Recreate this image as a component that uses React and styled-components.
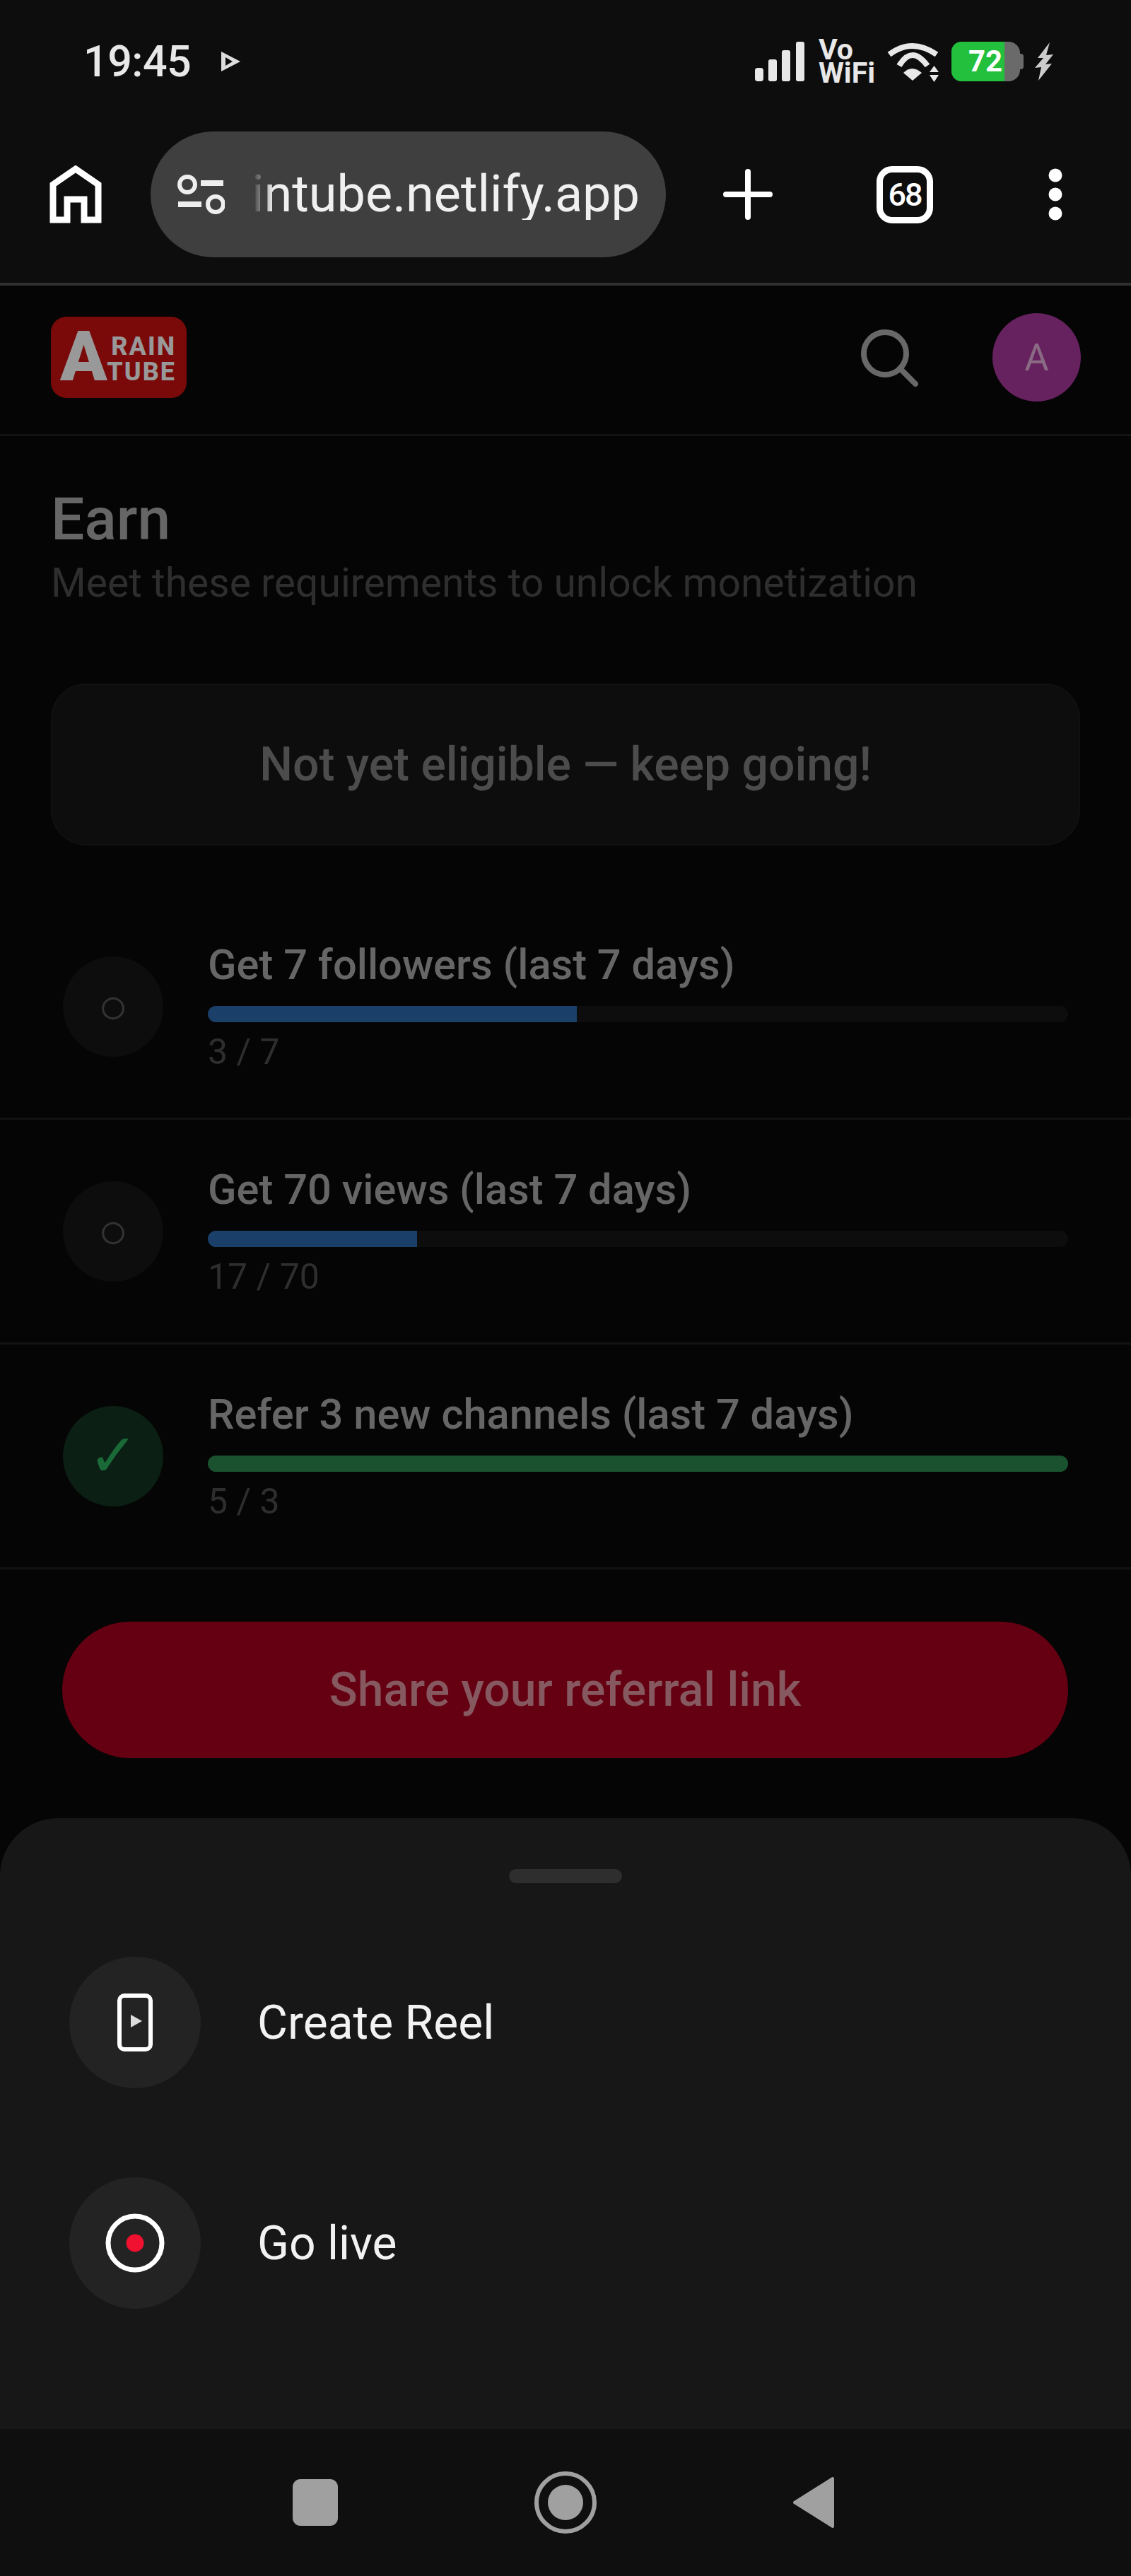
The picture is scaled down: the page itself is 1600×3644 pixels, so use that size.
import React from 'react';
import styled, { createGlobalStyle } from 'styled-components';

const GlobalStyle = createGlobalStyle`
  html, body { margin: 0; padding: 0; background: #050505; }
  * { box-sizing: border-box; }
`;

const requirements = [
  { label: 'Get 7 followers (last 7 days)', done: 3, goal: 7 },
  { label: 'Get 70 views (last 7 days)', done: 17, goal: 70 },
  { label: 'Refer 3 new channels (last 7 days)', done: 5, goal: 3 },
];

export default function App() {
  return (
    <Phone>
      <GlobalStyle />
      <Chrome>
        <StatusBar>
          <Clock>19:45</Clock>
          <svg width="29" height="30" viewBox="0 0 29 30">
            <path fill="#ddd" fillRule="evenodd" d="M1 1 L28 15 L1 29 Z M7 9 L7 21 L17 15 Z" />
          </svg>
          <StatusRight>
            <SignalBars width="70" height="56" viewBox="0 0 70 56" fill="#e8e8e8">
              <rect x="0" y="37" width="12" height="19" rx="4" />
              <rect x="19" y="25" width="12" height="31" rx="3" />
              <rect x="38" y="12" width="12" height="44" rx="3" />
              <rect x="58" y="0" width="12" height="56" rx="3" />
            </SignalBars>
            <VoWifi>
              <span>Vo</span>
              <span>WiFi</span>
            </VoWifi>
            <svg width="76" height="60" viewBox="0 0 76 60" fill="none">
              <path d="M4 20 Q36 -4 71 20" stroke="#e8e8e8" strokeWidth="8" />
              <path d="M18 36 Q36 6 58 36" stroke="#e8e8e8" strokeWidth="8" />
              <path d="M24 46 Q36 34 50 46 L37 57 Z" fill="#e8e8e8" />
              <path d="M61 45 H74 L67.5 36 Z M61 49 H74 L67.5 59 Z" fill="#e8e8e8" />
            </svg>
            <Battery>
              <BatteryLevel>72</BatteryLevel>
              <BatteryTip />
            </Battery>
            <svg width="26" height="54" viewBox="0 0 26 54">
              <path
                fill="#ccc"
                d="M21 0 L4 22 L12 22 L0 36 L9 35 L5 54 L24 30 L15 31 L26 17 L16 18 Z"
              />
            </svg>
          </StatusRight>
        </StatusBar>
        <Toolbar>
          <ToolCell>
            <svg width="74" height="82" viewBox="0 0 74 82" fill="none">
              <path
                d="M5 77 V27 L37 5 L69 27 V77 H49 V48 H25 V77 Z"
                stroke="#fff"
                strokeWidth="9"
                strokeLinejoin="miter"
              />
            </svg>
          </ToolCell>
          <UrlPill>
            <svg width="68" height="62" viewBox="0 0 68 62" fill="none" stroke="#eee" strokeWidth="6">
              <circle cx="15" cy="17" r="11" />
              <path d="M34 15 H66" strokeWidth="8" />
              <path d="M2 45 H35" strokeWidth="8" />
              <circle cx="55" cy="45" r="11" />
            </svg>
            <UrlText>intube.netlify.app</UrlText>
          </UrlPill>
          <ToolCell>
            <svg width="72" height="74" viewBox="0 0 72 74" stroke="#fff" strokeWidth="8" strokeLinecap="round">
              <path d="M36 5 V69 M5 37 H67" />
            </svg>
          </ToolCell>
          <ToolCell>
            <TabCount>68</TabCount>
          </ToolCell>
          <ToolCell>
            <svg width="20" height="74" viewBox="0 0 20 74" fill="#fff">
              <circle cx="10" cy="10" r="9.5" />
              <circle cx="10" cy="37" r="9.5" />
              <circle cx="10" cy="64" r="9.5" />
            </svg>
          </ToolCell>
        </Toolbar>
      </Chrome>

      <SiteHeader>
        <Logo>
          <LogoInitial>A</LogoInitial>
          <LogoWords>
            <span>RAIN</span>
            <span>TUBE</span>
          </LogoWords>
        </Logo>
        <HeaderActions>
          <svg width="82" height="82" viewBox="0 0 82 82" fill="none" stroke="#686868" strokeWidth="8">
            <circle cx="35" cy="35" r="30" />
            <path d="M56 56 L78 78" strokeLinecap="round" />
          </svg>
          <Avatar>A</Avatar>
        </HeaderActions>
      </SiteHeader>

      <Main>
        <Title>Earn</Title>
        <Subtitle>Meet these requirements to unlock monetization</Subtitle>
        <StatusCard>Not yet eligible — keep going!</StatusCard>
        <RequirementList>
          {requirements.map((r) => {
            const complete = r.done >= r.goal;
            return (
              <Requirement key={r.label}>
                <Marker $complete={complete}>{complete ? '✓' : '○'}</Marker>
                <RequirementBody>
                  <RequirementLabel>{r.label}</RequirementLabel>
                  <Track>
                    <Fill $complete={complete} style={{ width: `${Math.min(100, (r.done / r.goal) * 100)}%` }} />
                  </Track>
                  <Count>
                    {r.done} / {r.goal}
                  </Count>
                </RequirementBody>
              </Requirement>
            );
          })}
        </RequirementList>
        <ShareButton>Share your referral link</ShareButton>
      </Main>

      <Sheet>
        <Handle />
        <SheetItem>
          <SheetIcon>
            <svg width="50" height="82" viewBox="0 0 50 82" fill="none">
              <rect x="3" y="3" width="44" height="76" rx="7" stroke="#fff" strokeWidth="6" />
              <path d="M19 30 L35 39 L19 48 Z" fill="#ddd" />
            </svg>
          </SheetIcon>
          <SheetLabel>Create Reel</SheetLabel>
        </SheetItem>
        <SheetItem>
          <SheetIcon>
            <svg width="84" height="84" viewBox="0 0 84 84" fill="none">
              <circle cx="42" cy="42" r="38" stroke="#fff" strokeWidth="7" />
              <circle cx="42" cy="42" r="12.5" fill="#f0102f" />
            </svg>
          </SheetIcon>
          <SheetLabel>Go live</SheetLabel>
        </SheetItem>
      </Sheet>

      <NavBar>
        <svg width="64" height="66" viewBox="0 0 64 66">
          <rect x="0" y="0" width="64" height="66" rx="11" fill="#a0a0a0" />
        </svg>
        <svg width="88" height="88" viewBox="0 0 88 88" fill="none">
          <circle cx="44" cy="44" r="41" stroke="#a0a0a0" strokeWidth="6" />
          <circle cx="44" cy="44" r="25" fill="#a0a0a0" />
        </svg>
        <svg width="60" height="74" viewBox="0 0 60 74">
          <path d="M57 3 V71 L3 37 Z" fill="#a0a0a0" stroke="#a0a0a0" strokeWidth="4" strokeLinejoin="round" />
        </svg>
      </NavBar>
    </Phone>
  );
}

const Phone = styled.div`
  width: 1600px;
  height: 3644px;
  overflow: hidden;
  display: flex;
  flex-direction: column;
  background: #050505;
  font-family: Roboto, "Liberation Sans", sans-serif;
`;

const Chrome = styled.div`
  height: 404px;
  background: #0d0d0d;
  border-bottom: 4px solid #303030;
`;

const StatusBar = styled.div`
  height: 186px;
  padding: 0 110px 12px 118px;
  display: flex;
  align-items: center;
  gap: 42px;
`;

const Clock = styled.span`
  font-size: 61px;
  font-weight: 500;
  letter-spacing: -0.5px;
  color: #e8e8e8;
  line-height: 1;
`;

const StatusRight = styled.div`
  margin-left: auto;
  display: flex;
  align-items: center;
  gap: 16px;
`;

const SignalBars = styled.svg`
  margin-right: 4px;
`;

const VoWifi = styled.div`
  display: flex;
  flex-direction: column;
  font-size: 41px;
  font-weight: 700;
  line-height: 33px;
  color: #e8e8e8;
`;

const Battery = styled.div`
  width: 102px;
  height: 56px;
  position: relative;
`;

const BatteryLevel = styled.div`
  width: 97px;
  height: 56px;
  border-radius: 14px 16px 16px 14px;
  padding-left: 24px;
  background: linear-gradient(to right, #22c03c 75px, #6a6a6a 75px);
  color: #fff;
  font-size: 42px;
  font-weight: 700;
  line-height: 56px;
`;

const BatteryTip = styled.div`
  position: absolute;
  right: 0;
  top: 17px;
  width: 5px;
  height: 22px;
  border-radius: 0 4px 4px 0;
  background: #6a6a6a;
`;

const Toolbar = styled.div`
  display: grid;
  grid-template-columns: 213px 729px 232px 212px 214px;
  height: 178px;
`;

const ToolCell = styled.div`
  display: flex;
  align-items: center;
  justify-content: center;
`;

const UrlPill = styled.div`
  background: #3f3f3f;
  border-radius: 89px;
  padding-left: 37px;
  display: flex;
  align-items: center;
  gap: 38px;
`;

const UrlText = styled.span`
  font-size: 72px;
  color: #f0f0f0;
  line-height: 1;
  -webkit-mask-image: linear-gradient(to right, rgba(0, 0, 0, 0.15) 6px, #000 30px);
  mask-image: linear-gradient(to right, rgba(0, 0, 0, 0.15) 6px, #000 30px);
`;

const TabCount = styled.div`
  width: 80px;
  height: 81px;
  border: 9px solid #fff;
  border-radius: 22px;
  display: flex;
  align-items: center;
  justify-content: center;
  color: #fff;
  font-size: 45px;
  font-weight: 500;
  letter-spacing: -2px;
`;

const SiteHeader = styled.header`
  height: 213px;
  padding: 0 71px 7px 72px;
  display: flex;
  align-items: center;
  justify-content: space-between;
  border-bottom: 3px solid #121212;
`;

const Logo = styled.div`
  width: 192px;
  height: 115px;
  border-radius: 22px;
  background: #7a0a0a;
  display: flex;
  align-items: flex-end;
  padding: 0 15px 22px 13px;
  justify-content: space-between;
  color: #999;
  font-weight: 900;
`;

const LogoInitial = styled.span`
  font-size: 98px;
  line-height: 72px;
  letter-spacing: -2px;
`;

const LogoWords = styled.div`
  display: flex;
  flex-direction: column;
  align-items: flex-end;
  font-size: 36px;
  font-weight: 800;
  line-height: 36px;
  letter-spacing: 2px;
  margin-bottom: -3px;
`;

const HeaderActions = styled.div`
  display: flex;
  align-items: center;
  gap: 105px;
`;

const Avatar = styled.div`
  width: 125px;
  height: 125px;
  border-radius: 50%;
  background: #66225e;
  color: #8a6a84;
  font-size: 53px;
  display: flex;
  align-items: center;
  justify-content: center;
`;

const Main = styled.main`
  flex: 1;
  padding: 66px 72px 0;
`;

const Title = styled.h1`
  margin: 0;
  font-size: 84px;
  font-weight: 500;
  line-height: 104px;
  color: #666;
`;

const Subtitle = styled.p`
  margin: 6px 0 0;
  font-size: 57px;
  font-weight: 400;
  line-height: 64px;
  color: #2e2e2e;
`;

const StatusCard = styled.div`
  margin-top: 110px;
  height: 229px;
  border: 2px solid #111;
  border-radius: 50px;
  background: #0d0d0d;
  display: flex;
  align-items: center;
  justify-content: center;
  color: #4c4c4c;
  font-size: 66px;
  font-weight: 500;
`;

const RequirementList = styled.div`
  margin: 70px -72px 0;
`;

const Requirement = styled.div`
  height: 318px;
  padding: 0 89px 0 89px;
  border-bottom: 3px solid #121212;
  display: flex;
  align-items: center;
  gap: 63px;
`;

const Marker = styled.div`
  width: 142px;
  height: 142px;
  flex: none;
  border-radius: 50%;
  background: ${(p) => (p.$complete ? '#0b1f14' : '#0d0d0d')};
  color: ${(p) => (p.$complete ? '#1a6a38' : '#333')};
  font-size: ${(p) => (p.$complete ? '84px' : '72px')};
  display: flex;
  align-items: center;
  justify-content: center;
`;

const RequirementBody = styled.div`
  flex: 1;
`;

const RequirementLabel = styled.div`
  font-size: 59.6px;
  font-weight: 500;
  line-height: 72px;
  color: #666;
`;

const Track = styled.div`
  height: 23px;
  margin-top: 22px;
  border-radius: 12px;
  overflow: hidden;
  background: #0d0d0d;
`;

const Fill = styled.div`
  height: 100%;
  background: ${(p) => (p.$complete ? '#1a5230' : '#1a3f68')};
`;

const Count = styled.div`
  margin-top: 12px;
  font-size: 50px;
  line-height: 60px;
  color: #2e2e2e;
`;

const ShareButton = styled.button`
  display: block;
  width: 1423px;
  height: 193px;
  margin: 74px 0 0 16px;
  border: 0;
  border-radius: 97px;
  background: #650012;
  color: #86585f;
  font-family: inherit;
  font-size: 66px;
  font-weight: 500;
`;

const Sheet = styled.section`
  height: 864px;
  flex: none;
  background: #171717;
  border-radius: 82px 82px 0 0;
  padding: 72px 98px 0;
`;

const Handle = styled.div`
  width: 160px;
  height: 20px;
  margin: 0 auto 104px;
  border-radius: 10px;
  background: #2e2e2e;
`;

const SheetItem = styled.div`
  display: flex;
  align-items: center;
  gap: 80px;
  margin-bottom: 126px;
`;

const SheetIcon = styled.div`
  width: 186px;
  height: 186px;
  flex: none;
  border-radius: 50%;
  background: #232323;
  display: flex;
  align-items: center;
  justify-content: center;
`;

const SheetLabel = styled.span`
  font-size: 66px;
  color: #f2f2f2;
`;

const NavBar = styled.nav`
  height: 208px;
  flex: none;
  background: #0f0f0f;
  display: flex;
  align-items: center;
  padding: 0 419px 0 414px;
  justify-content: space-between;
`;
